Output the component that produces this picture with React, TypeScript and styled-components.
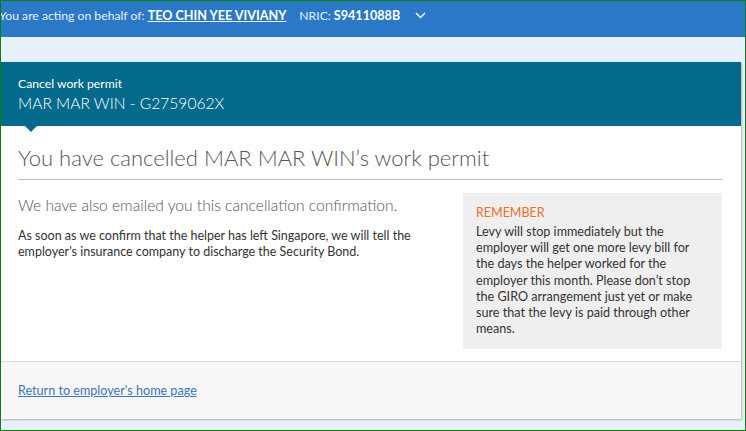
import React from 'react';
import styled, { createGlobalStyle } from 'styled-components';

const GlobalStyle = createGlobalStyle`
  html, body {
    margin: 0;
    padding: 0;
  }
  body {
    font-family: Lato, "Open Sans", "Liberation Sans", sans-serif;
    color: #333;
  }
  * {
    box-sizing: border-box;
  }
`;

const Frame = styled.div`
  width: 746px;
  height: 431px;
  border: 1px solid #0a800a;
  background-color: #e8f0fb;
  overflow: hidden;
  display: flex;
  flex-direction: column;
`;

const TopBar = styled.div`
  height: 36px;
  flex-shrink: 0;
  background-color: #2b79c6;
  color: #fff;
  display: flex;
  align-items: flex-start;
  padding-top: 6px;
  font-size: 12.2px;
  line-height: 18px;
  white-space: nowrap;
  margin-left: -2px;
`;

const Label = styled.span`
  color: #e6eefa;
`;

const ActingName = styled.a`
  color: #fff;
  font-weight: 700;
  font-size: 12.6px;
  text-decoration: underline;
  margin-left: 3px;
  cursor: pointer;
`;

const Nric = styled.span`
  margin-left: 13px;
  color: #e6eefa;
`;

const NricValue = styled.span`
  color: #fff;
  font-weight: 700;
  font-size: 12.6px;
  margin-left: 3px;
`;

const Chevron = styled.span`
  display: inline-flex;
  margin-left: 15px;
  margin-top: 5px;
`;

const Band = styled.div`
  height: 25px;
  flex-shrink: 0;
`;

const Card = styled.div`
  margin-right: 4px;
  background-color: #fff;
  box-shadow: 1px 1px 2px rgba(0, 0, 0, 0.25);
  display: flex;
  flex-direction: column;
`;

const CardHeader = styled.div`
  position: relative;
  height: 64px;
  background-color: #036a8c;
  color: #fff;
  padding: 14px 17px 0;

  &::after {
    content: '';
    position: absolute;
    left: 24px;
    bottom: -6px;
    border-left: 6px solid transparent;
    border-right: 6px solid transparent;
    border-top: 6px solid #036a8c;
  }
`;

const Eyebrow = styled.div`
  font-size: 12.2px;
  line-height: 16px;
`;

const HeaderTitle = styled.div`
  font-size: 15.6px;
  font-weight: 300;
  line-height: 22px;
`;

const CardBody = styled.div`
  padding: 19px 19px 12px 17px;
`;

const Heading = styled.h1`
  margin: 0;
  font-size: 22px;
  font-weight: 300;
  line-height: 26px;
  color: #555;
  padding-bottom: 8px;
  border-bottom: 1px solid #bdbdbd;
`;

const Columns = styled.div`
  display: flex;
  justify-content: space-between;
  margin-top: 13px;
`;

const MainColumn = styled.div`
  width: 430px;
  padding-top: 2px;
`;

const Lead = styled.p`
  margin: 0 0 13px;
  font-size: 15.6px;
  font-weight: 300;
  line-height: 20px;
  color: #555;
`;

const Paragraph = styled.p`
  margin: 0;
  font-size: 12.5px;
  line-height: 16px;
  color: #333;
`;

const Reminder = styled.div`
  width: 259px;
  background-color: #efefef;
  padding: 12px 18px 12px 13px;
`;

const ReminderTitle = styled.div`
  font-size: 12.5px;
  line-height: 16px;
  color: #e8711f;
  margin-bottom: 3px;
`;

const ReminderText = styled.p`
  margin: 0;
  font-size: 12.6px;
  line-height: 16.2px;
  color: #333;
`;

const Footer = styled.div`
  height: 58px;
  border-top: 1px solid #dcdcdc;
  background-color: #f7f7f7;
  display: flex;
  align-items: center;
  padding: 0 17px;
`;

const FooterLink = styled.a`
  font-size: 12.6px;
  color: #3c73c0;
  text-decoration: underline;
  cursor: pointer;
`;

export default function App() {
  return (
    <>
      <GlobalStyle />
      <Frame>
        <TopBar>
          <Label>You are acting on behalf of:</Label>
          <ActingName>TEO CHIN YEE VIVIANY</ActingName>
          <Nric>NRIC:</Nric>
          <NricValue>S9411088B</NricValue>
          <Chevron>
            <svg width="11" height="7" viewBox="0 0 11 7">
              <path d="M1 1l4.5 4.5L10 1" fill="none" stroke="#fff" strokeWidth="1.4" />
            </svg>
          </Chevron>
        </TopBar>
        <Band />
        <Card>
          <CardHeader>
            <Eyebrow>Cancel work permit</Eyebrow>
            <HeaderTitle>MAR MAR WIN - G2759062X</HeaderTitle>
          </CardHeader>
          <CardBody>
            <Heading>You have cancelled MAR MAR WIN’s work permit</Heading>
            <Columns>
              <MainColumn>
                <Lead>We have also emailed you this cancellation confirmation.</Lead>
                <Paragraph>
                  As soon as we confirm that the helper has left Singapore, we will tell the
                  employer's insurance company to discharge the Security Bond.
                </Paragraph>
              </MainColumn>
              <Reminder>
                <ReminderTitle>REMEMBER</ReminderTitle>
                <ReminderText>
                  Levy will stop immediately but the employer will get one more levy bill for
                  the days the helper worked for the employer this month. Please don’t stop
                  the GIRO arrangement just yet or make sure that the levy is paid through
                  other means.
                </ReminderText>
              </Reminder>
            </Columns>
          </CardBody>
          <Footer>
            <FooterLink>Return to employer's home page</FooterLink>
          </Footer>
        </Card>
      </Frame>
    </>
  );
}
